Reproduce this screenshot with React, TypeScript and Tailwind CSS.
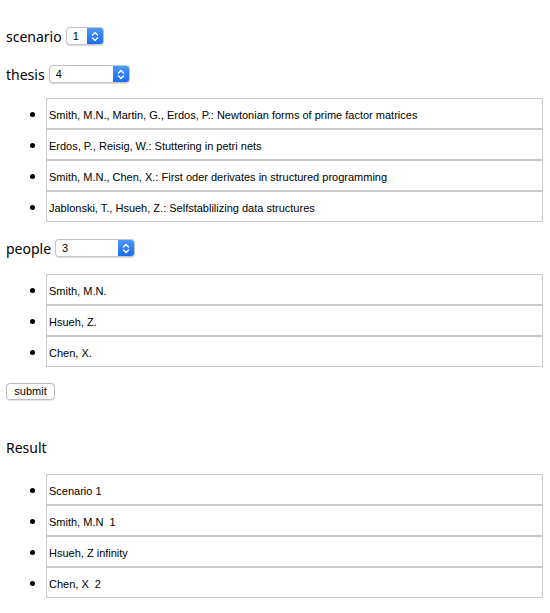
import React from 'react';

const Chevrons = () => (
  <svg width="8" height="11" viewBox="0 0 8 11" fill="none" stroke="white" strokeWidth="1.4" strokeLinecap="round" strokeLinejoin="round">
    <path d="M1.5 4 L4 1.5 L6.5 4" />
    <path d="M1.5 7 L4 9.5 L6.5 7" />
  </svg>
);

const FakeSelect = ({ value, width }: { value: string; width: string }) => (
  <div
    className={`${width} h-[18px] flex items-stretch rounded-[4px] border border-[#c4c4c4] bg-white shadow-[0_0.5px_1px_rgba(0,0,0,0.15)] overflow-hidden`}
  >
    <span className="flex-1 pl-[6px] text-[11px] leading-[17px] text-black font-['Liberation_Sans',sans-serif]">
      {value}
    </span>
    <span className="w-[16px] flex items-center justify-center bg-gradient-to-b from-[#4a98f7] to-[#1a6cf0]">
      <Chevrons />
    </span>
  </div>
);

const Boxes = ({ items }: { items: string[] }) => (
  <ul className="list-disc pl-[40px] marker:text-[15px]">
    {items.map((item) => (
      <li
        key={item}
        className="h-[31px] border border-[#cbcbcb] pl-[2px] text-[11px] leading-[29px] text-black font-['Liberation_Sans',sans-serif] whitespace-pre"
      >
        {item}
      </li>
    ))}
  </ul>
);

const App = () => {
  const thesis = [
    'Smith, M.N., Martin, G., Erdos, P.: Newtonian forms of prime factor matrices',
    'Erdos, P., Reisig, W.: Stuttering in petri nets',
    'Smith, M.N., Chen, X.: First oder derivates in structured programming',
    'Jablonski, T., Hsueh, Z.: Selfstablilizing data structures',
  ];
  const people = ['Smith, M.N.', 'Hsueh, Z.', 'Chen, X.'];
  const result = ['Scenario 1', 'Smith, M.N  1', 'Hsueh, Z infinity', 'Chen, X  2'];

  return (
    <div className="w-[550px] min-h-[613px] bg-white pl-[6px] pr-[7px] pt-[26px] font-['Noto_Sans',sans-serif] text-black">
      <div className="flex items-center gap-[4px] h-[20px]">
        <span className="text-[14px]">scenario</span>
        <FakeSelect value="1" width="w-[38px]" />
      </div>

      <div className="flex items-center gap-[4px] h-[20px] mt-[18px]">
        <span className="text-[14px]">thesis</span>
        <FakeSelect value="4" width="w-[81px]" />
      </div>

      <div className="mt-[14px]">
        <Boxes items={thesis} />
      </div>

      <div className="flex items-center gap-[4px] h-[20px] mt-[16px]">
        <span className="text-[14px]">people</span>
        <FakeSelect value="3" width="w-[80px]" />
      </div>

      <div className="mt-[16px]">
        <Boxes items={people} />
      </div>

      <button className="mt-[16px] h-[17px] w-[49px] rounded-[4px] border border-[#bdbdbd] bg-white text-[11px] leading-[15px] font-['Liberation_Sans',sans-serif] shadow-[0_0.5px_1px_rgba(0,0,0,0.1)]">
        submit
      </button>

      <div className="mt-[37px] h-[20px] text-[14px] leading-[20px]">Result</div>

      <div className="mt-[16px]">
        <Boxes items={result} />
      </div>
    </div>
  );
};

export default App;
